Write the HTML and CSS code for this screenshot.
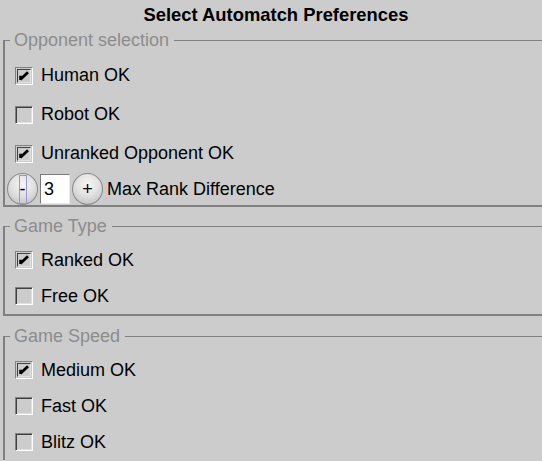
FILE: index.html
```html
<!DOCTYPE html>
<html>
<head>
<meta charset="utf-8">
<link rel="stylesheet" href="styles.css">
</head>
<body>
<div class="title">Select Automatch Preferences</div>

<fieldset class="group g1">
  <legend>Opponent selection</legend>
  <div class="rows tall">
    <label class="row"><span class="box"><svg viewBox="0 0 13 13" width="13" height="13"><path d="M2.8 6.2 V10.8 M2.6 10.4 L10.8 2.4" stroke="#000" stroke-width="3" fill="none"/></svg></span>Human OK</label>
    <label class="row"><span class="box"></span>Robot OK</label>
    <label class="row"><span class="box"><svg viewBox="0 0 13 13" width="13" height="13"><path d="M2.8 6.2 V10.8 M2.6 10.4 L10.8 2.4" stroke="#000" stroke-width="3" fill="none"/></svg></span>Unranked Opponent OK</label>
  </div>
  <div class="spin">
    <span class="btn"><span class="focus">-</span></span>
    <span class="field">3</span>
    <span class="btn">+</span>
    <span class="spin-label">Max Rank Difference</span>
  </div>
</fieldset>

<fieldset class="group g2">
  <legend>Game Type</legend>
  <div class="rows">
    <label class="row"><span class="box"><svg viewBox="0 0 13 13" width="13" height="13"><path d="M2.8 6.2 V10.8 M2.6 10.4 L10.8 2.4" stroke="#000" stroke-width="3" fill="none"/></svg></span>Ranked OK</label>
    <label class="row"><span class="box"></span>Free OK</label>
  </div>
</fieldset>

<fieldset class="group g3">
  <legend>Game Speed</legend>
  <div class="rows">
    <label class="row"><span class="box"><svg viewBox="0 0 13 13" width="13" height="13"><path d="M2.8 6.2 V10.8 M2.6 10.4 L10.8 2.4" stroke="#000" stroke-width="3" fill="none"/></svg></span>Medium OK</label>
    <label class="row"><span class="box"></span>Fast OK</label>
    <label class="row"><span class="box"></span>Blitz OK</label>
  </div>
</fieldset>
</body>
</html>
```

FILE: styles.css
```css
html, body {
  margin: 0;
  padding: 0;
  background: #cccccc;
  overflow: hidden;
}
body {
  font-family: "Liberation Sans", Arial, sans-serif;
  font-size: 18px;
  color: #000;
  width: 542px;
  height: 461px;
}
.title {
  height: 30px;
  line-height: 30px;
  text-align: center;
  font-weight: bold;
  font-size: 18.4px;
  padding-left: 10px;
}
.group {
  margin: 0 0 0 3px;
  padding: 0;
  border: none;
  border-left: 2px solid #808080;
  border-top: 1px solid #808080;
  border-bottom: 2px solid #808080;
  min-inline-size: 0;
}
.group legend {
  margin-left: 5px;
  padding: 0 5px 0 4px;
  color: #8c8c8c;
  line-height: 20px;
  font-size: 18px;
}
.g2 { margin-top: 9px; }
.g3 { margin-top: 10px; border-bottom: none; }
.rows {
  display: flex;
  flex-direction: column;
  padding: 6px 0 0 10px;
}
.g1 .rows { padding-top: 6px; }
.row {
  display: flex;
  align-items: center;
  height: 36px;
}
.tall .row { height: 39px; }
.box {
  box-sizing: border-box;
  width: 18px;
  height: 18px;
  margin-right: 8px;
  border-top: 1px solid #808080;
  border-left: 1px solid #808080;
  border-right: 1px solid #ffffff;
  border-bottom: 1px solid #ffffff;
  display: flex;
  align-items: center;
  justify-content: center;
}
.box svg {
  display: block;
  border-top: 1px solid #404040;
  border-left: 1px solid #404040;
  border-right: 1px solid #e0e0e0;
  border-bottom: 1px solid #e0e0e0;
  box-sizing: content-box;
  width: 12px;
  height: 12px;
}
.box:empty {
  box-shadow: inset 1px 1px 0 #404040, inset -1px -1px 0 #e0e0e0;
}
.spin {
  display: flex;
  align-items: center;
  height: 32px;
  padding-left: 2px;
}
.btn {
  box-sizing: border-box;
  width: 31px;
  height: 32px;
  border-radius: 50%;
  border: 1px solid #8a8a8a;
  background: radial-gradient(circle at 50% 35%, #f6f6f6 0%, #e2e2e2 45%, #b8b8b8 100%);
  display: flex;
  align-items: center;
  justify-content: center;
  font-size: 18px;
  line-height: 1;
}
.focus {
  display: flex;
  align-items: center;
  justify-content: center;
  width: 8px;
  height: 29px;
  border: 1px solid #9a94d8;
  box-sizing: border-box;
}
.field {
  box-sizing: border-box;
  width: 30px;
  height: 30px;
  margin: 0 2px 0 2px;
  background: #fff;
  border-top: 1px solid #7a7a7a;
  border-left: 1px solid #7a7a7a;
  border-right: 1px solid #e8e8e8;
  border-bottom: 1px solid #e8e8e8;
  padding-left: 3px;
  line-height: 28px;
}
.spin-label {
  margin-left: 4px;
}
```
